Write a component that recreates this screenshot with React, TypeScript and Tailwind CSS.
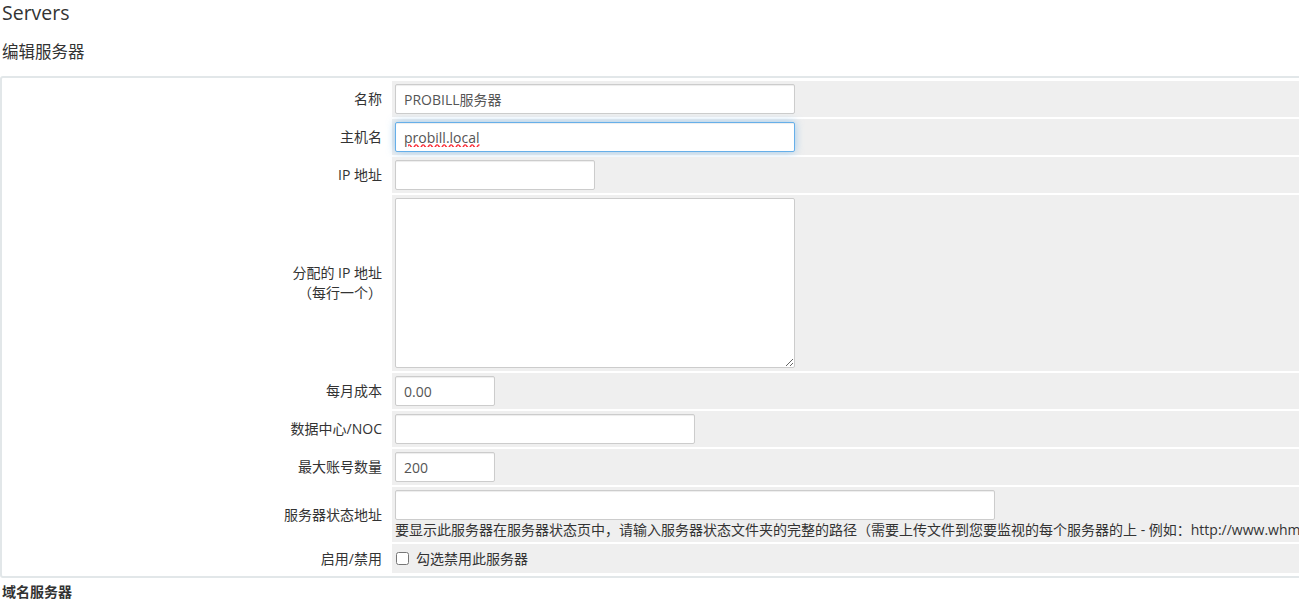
import type { ReactNode } from "react"

const inputCls =
	"h-[30px] rounded-[2px] border border-[#cccccc] bg-white px-2 text-[14px] text-[#555555] outline-none shadow-[inset_0_1px_1px_rgba(0,0,0,0.075)]"

function Row({ label, children }: { label: ReactNode; children: ReactNode }) {
	return (
		<tr>
			<td className="w-[385px] bg-white pr-[8px] text-right align-middle text-[14px] leading-[20px] text-[#333333]">
				{label}
			</td>
			<td className="bg-[#efefef] py-[3px] pl-[3px] align-middle">{children}</td>
		</tr>
	)
}

export default function App() {
	return (
		<div
			className="w-[1299px] overflow-hidden bg-white text-[#333333]"
			style={{ fontFamily: '"Open Sans", "Noto Sans CJK SC", sans-serif' }}
		>
			<h1 className="pl-[2px] text-[19.5px] leading-[25px] font-normal text-[#333333]">Servers</h1>
			<h2 className="mt-[16px] pl-[2px] text-[16.5px] leading-[22px] text-[#333333]">编辑服务器</h2>

			<div className="mt-[13px] w-max rounded-[3px] border-2 border-[#e2e7e9] bg-white p-[1px]">
				<table className="border-separate border-spacing-[2px]">
					<tbody>
						<Row label="名称">
							<input className={`${inputCls} block w-[400px]`} defaultValue="PROBILL服务器" />
						</Row>
						<Row label="主机名">
							<input
								className="block h-[30px] w-[400px] rounded-[2px] border border-[#66afe9] bg-white px-2 text-[14px] text-[#555555] underline decoration-red-500 decoration-wavy outline-none shadow-[inset_0_1px_1px_rgba(0,0,0,0.075),0_0_8px_rgba(102,175,233,0.6)]"
								defaultValue="probill.local"
							/>
						</Row>
						<Row label="IP 地址">
							<input className={`${inputCls} block w-[200px]`} />
						</Row>
						<Row
							label={
								<>
									分配的 IP 地址
									<br />
									（每行一个）
								</>
							}
						>
							<textarea className="block h-[170px] w-[400px] rounded-[2px] border border-[#cccccc] bg-white outline-none" />
						</Row>
						<Row label="每月成本">
							<input className={`${inputCls} block w-[100px]`} defaultValue="0.00" />
						</Row>
						<Row label="数据中心/NOC">
							<input className={`${inputCls} block w-[300px]`} />
						</Row>
						<Row label="最大账号数量">
							<input className={`${inputCls} block w-[100px]`} defaultValue="200" />
						</Row>
						<Row label="服务器状态地址">
							<input className={`${inputCls} block w-[600px]`} />
							<div className="whitespace-nowrap text-[14px] leading-[19px] text-[#333333]">
								要显示此服务器在服务器状态页中，请输入服务器状态文件夹的完整的路径（需要上传文件到您要监视的每个服务器的上 - 例如：http://www.whmcs.com/status/）
							</div>
						</Row>
						<tr>
							<td className="w-[385px] bg-white pr-[8px] text-right align-middle text-[14px] text-[#333333]">
								启用/禁用
							</td>
							<td className="h-[29px] bg-[#efefef] pl-[4px] align-middle">
								<label className="flex items-center gap-[7px] text-[14px] text-[#333333]">
									<input type="checkbox" className="m-0 h-[13px] w-[13px]" />
									勾选禁用此服务器
								</label>
							</td>
						</tr>
					</tbody>
				</table>
			</div>

			<h3 className="mt-[4px] pl-[2px] text-[14px] leading-[20px] font-bold text-[#333333]">域名服务器</h3>
		</div>
	)
}
